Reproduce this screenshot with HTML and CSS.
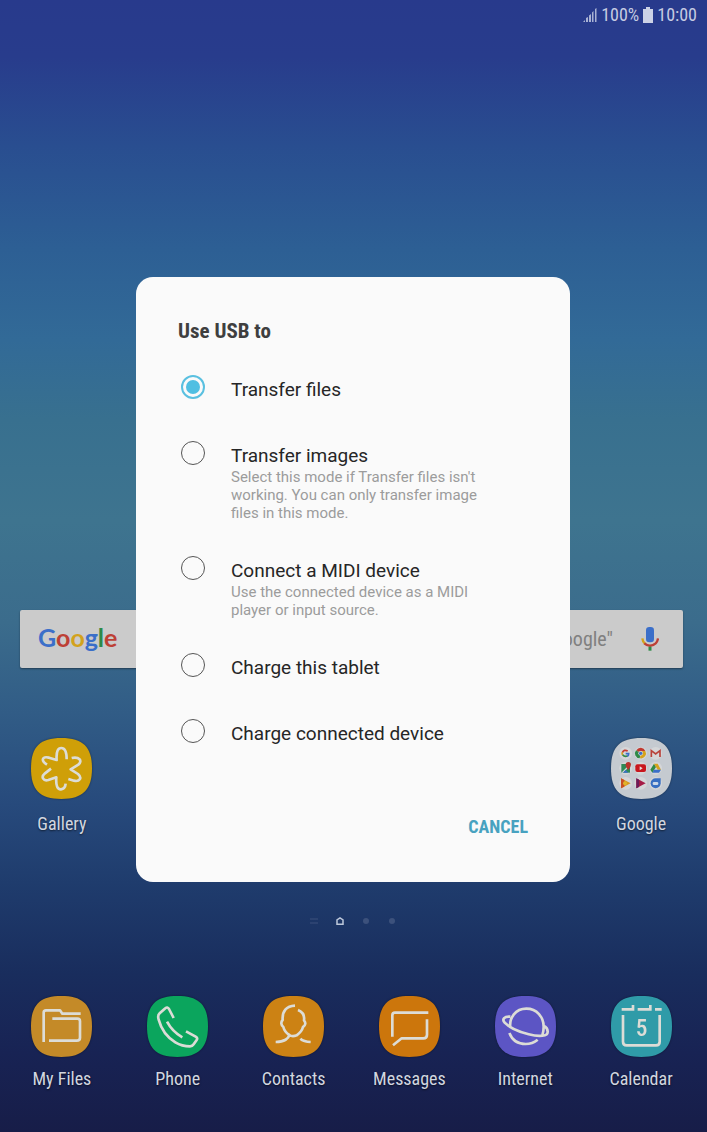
FILE: index.html
```html
<!DOCTYPE html>
<html lang="en">
<head>
<meta charset="utf-8">
<meta name="viewport" content="width=device-width, initial-scale=1">
<title>Use USB to</title>
<link rel="stylesheet" href="styles.css">
</head>
<body>
<div class="home">
  <header class="status">
    <svg class="signal" viewBox="0 0 14 14" aria-hidden="true"><path d="M0 14l2-2v2zM3 14v-4l2-1v5zM6 14V7.500L8 6v8zM9 14V4.500L10.500 3v11zM12 14V1l1.500-1v14z"/></svg>
    <span>100%</span>
    <svg class="battery" viewBox="0 0 10 16" aria-hidden="true"><path d="M3 0h4v2h3v14H0V2h3z"/></svg>
    <span>10:00</span>
  </header>

  <main class="desktop">
    <form class="search">
      <span class="logo"><span class="b">G</span><span class="r">o</span><span class="y">o</span><span class="b">g</span><span class="g">l</span><span class="r">e</span></span>
      <input class="query" type="text" aria-label="Search" placeholder='Say "Ok Google"'>
      <button class="mic" type="button" aria-label="Voice search">
        <svg viewBox="0 0 54 72" aria-hidden="true">
          <rect x="15" y="0" width="24" height="46" rx="10" fill="#3b6fc9"/>
          <path d="M4 34q1 10 8 16" fill="none" stroke="#d3a21c" stroke-width="7"/>
          <path d="M10 49q17 15 34 0 6-6 7-15" fill="none" stroke="#bd4036" stroke-width="7"/>
          <path d="M27 59v12" stroke="#2d8a47" stroke-width="9"/>
        </svg>
      </button>
    </form>

    <nav class="apps" aria-label="Apps">
      <a class="app" href="#gallery">
        <svg class="icon" viewBox="0 0 183 183" aria-hidden="true">
          <path class="tile" fill="#cf9f08" d="M91 0C156 0 183 27 183 91S156 183 91 183 0 156 0 91 27 0 91 0z"/>
          <path class="line" d="M48 80C28 67 34 54 54 59l23 7C75 38 82 30 91 30s16 11 16 34M122 60c22-5 34 8 20 20l-23 14 22 14c14 12 4 24-12 20l-17-5M60 92L42 106c-14 12-4 24 10 20l24-8c-2 26 4 37 14 36 9-1 13-7 14-17"/>
        </svg>
        <span>Gallery</span>
      </a>
      <a class="app app-last" href="#google">
        <svg class="icon" viewBox="0 0 183 183" aria-hidden="true">
          <path class="tile" fill="#c5cad0" d="M91 0C156 0 183 27 183 91S156 183 91 183 0 156 0 91 27 0 91 0z"/>
          <g fill="#d5d6d8"><circle cx="44" cy="46" r="19"/><circle cx="89" cy="46" r="19"/><circle cx="134" cy="46" r="19"/><circle cx="44" cy="91" r="19"/><circle cx="89" cy="91" r="19"/><circle cx="134" cy="91" r="19"/><circle cx="44" cy="136" r="19"/><circle cx="89" cy="136" r="19"/><circle cx="134" cy="136" r="19"/></g>
          <g fill="none" stroke-width="5">
            <path stroke="#c63a30" d="M50 39q-11-6-16 5"/><path stroke="#d5a21c" d="M34 43q-2 5 1 8"/><path stroke="#2f8a48" d="M35 50q6 8 15 3"/><path stroke="#3b6fc9" d="M44 47h9q0 5-4 8"/>
          </g>
          <path fill="#c0392f" d="M89 46L76 37a15 15 0 0 1 27 2H89z"/><path fill="#2f8a48" d="M89 46l-3 15a15 15 0 0 1-11-24z"/><path fill="#d5a21c" d="M89 46V39h14a15 15 0 0 1-16 22z"/><circle cx="89" cy="46" r="7" fill="#d5d6d8"/><circle cx="89" cy="46" r="5" fill="#3b6fc9"/>
          <path fill="none" stroke="#b9423a" stroke-width="5" d="M121 57V38l13 10 13-10v19"/>
          <path fill="#2f8a56" d="M31 78h26v26H31z"/><path fill="#d5d6d8" d="M31 104l20-20 3 3-18 17z"/><path fill="#3b6fc9" d="M44 96l8 8H36z"/><path fill="#b9342c" d="M52 96q-9-10-8-16a8 8 0 0 1 16 0q0 6-8 16z"/>
          <rect x="73" y="79" width="32" height="23" rx="6" fill="#c8161d"/><path fill="#e8dada" d="M86 85l9 6-9 6z"/>
          <path fill="#2f8a48" d="M129 77l6 10-11 17-6-9z"/><path fill="#d5a21c" d="M129 77h11l10 18h-10z"/><path fill="#3b6fc9" d="M129 95h21l-6 9h-20z"/>
          <path fill="#d79a20" d="M30 121l29 15-29 15z"/><path fill="#c94f25" d="M30 121l10 5v20l-10 5z"/><circle cx="42" cy="136" r="6" fill="#e0b32b"/>
          <path fill="#a51b46" d="M76 121l28 15-28 15z"/><path fill="#6b1c58" d="M76 121l8 4v22l-8 4z"/>
          <path fill="#386fc2" d="M134 121h15v15a15 15 0 1 1-15-15z"/><rect x="125" y="132" width="17" height="9" rx="4" fill="#cbd8e8"/>
        </svg>
        <span>Google</span>
      </a>
    </nav>

    <div class="pager" aria-hidden="true">
      <svg viewBox="0 0 8 8"><path d="M0 2h8M0 6h8" stroke="#3c517c"/></svg>
      <svg viewBox="0 0 8 8"><path d="M1 7.200V3l3-2 3 2v4.200z" fill="none" stroke="#bcc7da" stroke-width="1.500"/></svg>
      <svg viewBox="0 0 8 8"><circle cx="4" cy="4" r="3" fill="#3c517c"/></svg>
      <svg viewBox="0 0 8 8"><circle cx="4" cy="4" r="3" fill="#3c517c"/></svg>
    </div>

    <nav class="apps dock" aria-label="Favourites">
      <a class="app" href="#files">
        <svg class="icon" viewBox="0 0 183 183" aria-hidden="true">
          <path class="tile" fill="#c48a28" d="M91 0C156 0 183 27 183 91S156 183 91 183 0 156 0 91 27 0 91 0z"/>
          <path class="line" d="M38 138V50q0-7 7-7h42l7 10h55M64 68h75q8 0 8 8v49q0 9-10 9H54"/>
        </svg>
        <span>My Files</span>
      </a>
      <a class="app" href="#phone">
        <svg class="icon" viewBox="0 0 183 183" aria-hidden="true">
          <path class="tile" fill="#0ba55d" d="M91 0C156 0 183 27 183 91S156 183 91 183 0 156 0 91 27 0 91 0z"/>
          <path class="line" d="M80 66L66 39q-5-8-11-2L38 52q-7 6-3 19 12 45 50 68 20 12 44 12 7 0 11-6l9-13q4-6-3-10l-29-16M60 77q16 30 46 47"/>
        </svg>
        <span>Phone</span>
      </a>
      <a class="app" href="#contacts">
        <svg class="icon" viewBox="0 0 183 183" aria-hidden="true">
          <path class="tile" fill="#cc8214" d="M91 0C156 0 183 27 183 91S156 183 91 183 0 156 0 91 27 0 91 0z"/>
          <path class="line" d="M96 29C70 30 57 46 59 72c-6 6-5 16 2 21 3 12 10 19 18 24-2 10-14 21-41 21M105 42c15 6 20 17 18 31 6 7 5 15-3 20-3 12-12 20-19 25-8 3-16 3-22-1M112 128q10 9 31 10"/>
        </svg>
        <span>Contacts</span>
      </a>
      <a class="app" href="#messages">
        <svg class="icon" viewBox="0 0 183 183" aria-hidden="true">
          <path class="tile" fill="#cc760c" d="M91 0C156 0 183 27 183 91S156 183 91 183 0 156 0 91 27 0 91 0z"/>
          <path class="line" d="M148 50H48q-8 0-8 8v64M144 70v46q0 11-11 11H68l-26 21"/>
        </svg>
        <span>Messages</span>
      </a>
      <a class="app" href="#internet">
        <svg class="icon" viewBox="0 0 183 183" aria-hidden="true">
          <path class="tile" fill="#5c55c4" d="M91 0C156 0 183 27 183 91S156 183 91 183 0 156 0 91 27 0 91 0z"/>
          <path class="line" d="M46 95C42 64 62 38 94 38s52 26 52 54q0 14-4 26M46 62C28 60 20 70 29 80c12 13 42 27 72 35 32 8 58 6 57-8 0-8-5-14-11-17M43 111c8 20 26 33 49 33q20 0 36-13"/>
        </svg>
        <span>Internet</span>
      </a>
      <a class="app" href="#calendar">
        <svg class="icon" viewBox="0 0 183 183" aria-hidden="true">
          <path class="tile" fill="#2f9ba8" d="M91 0C156 0 183 27 183 91S156 183 91 183 0 156 0 91 27 0 91 0z"/>
          <path class="line calendar-line" d="M32 40h34V27M80 40h38V27M132 40h20M36 57v80q0 11 11 11h88q11 0 11-11V57"/>
          <text class="day" x="92" y="120" text-anchor="middle">5</text>
        </svg>
        <span>Calendar</span>
      </a>
    </nav>
  </main>
</div>

<div class="overlay">
  <form class="dialog" role="dialog" aria-labelledby="usb-title">
    <h1 class="title" id="usb-title">Use USB to</h1>
    <div class="options">
      <label class="option">
        <input class="radio" type="radio" name="usb" checked>
        <span class="copy"><span class="name">Transfer files</span></span>
      </label>
      <label class="option">
        <input class="radio" type="radio" name="usb">
        <span class="copy"><span class="name">Transfer images</span><span class="note">Select this mode if Transfer files isn't working. You can only transfer image files in this mode.</span></span>
      </label>
      <label class="option">
        <input class="radio" type="radio" name="usb">
        <span class="copy"><span class="name">Connect a MIDI device</span><span class="note">Use the connected device as a MIDI player or input source.</span></span>
      </label>
      <label class="option">
        <input class="radio" type="radio" name="usb">
        <span class="copy"><span class="name">Charge this tablet</span></span>
      </label>
      <label class="option">
        <input class="radio" type="radio" name="usb">
        <span class="copy"><span class="name">Charge connected device</span></span>
      </label>
    </div>
    <div class="actions"><button class="cancel" type="button">CANCEL</button></div>
  </form>
</div>
</body>
</html>
```

FILE: styles.css
```css
* { box-sizing: border-box; }

:root {
  --condensed: "Roboto Condensed", "Liberation Sans Narrow", Roboto, sans-serif;
}

body {
  margin: 0;
  font-family: Roboto, sans-serif;
}

.home {
  display: flex;
  flex-direction: column;
  min-height: 100vh;
  background: linear-gradient(#283a8c 0%, #283c8c 5%, #294e90 13%, #2d5f94 22%, #326a97 30%, #38708f 37%, #3e748f 46%, #3b6c8c 55%, #315c86 63%, #274a7c 71%, #1f3c6d 78%, #192d5d 86%, #182354 93%, #171d48 100%);
}

.status {
  display: flex;
  align-items: center;
  justify-content: flex-end;
  gap: 4px;
  height: 30px;
  padding: 0 10px;
  font: 18px/30px var(--condensed);
  color: #c6cce2;
}
.signal { width: 14px; height: 14px; fill: #a9b2d4; }
.battery { width: 10px; height: 16px; fill: #ccd2e6; }

.desktop {
  display: flex;
  flex: 1;
  flex-direction: column;
  justify-content: flex-end;
}

.search {
  display: flex;
  align-items: center;
  height: 58px;
  margin: 0 24px 70px 20px;
  padding: 0 14px 0 18px;
  border-radius: 2px;
  background: #cbcbcb;
  box-shadow: 0 1px 2px rgba(0, 0, 0, .4);
}
.logo {
  padding-bottom: 4px;
  font: 700 25px/36px Lato, sans-serif;
}
.b { color: #3b6fc9; }
.r { color: #bd4036; }
.y { color: #d3a21c; }
.g { color: #2d8a47; }
.query {
  flex: 1;
  min-width: 0;
  padding: 0;
  border: 0;
  background: none;
  font: 20px/28px var(--condensed);
  text-align: right;
}
.query::placeholder { color: #808080; opacity: 1; }
.mic {
  display: flex;
  justify-content: center;
  width: 38px;
  margin-left: 18px;
  padding: 0;
  border: 0;
  background: none;
}
.mic svg { width: 18px; height: 24px; }

.apps {
  display: grid;
  grid-template-columns: repeat(6, 1fr);
  padding: 0 8px 0 4px;
}
.app {
  display: flex;
  flex-direction: column;
  align-items: center;
  gap: 14px;
  font: 18px/22px var(--condensed);
  color: #d2d7e0;
  text-decoration: none;
  text-shadow: 0 1px 2px rgba(0, 0, 0, .6);
}
.app-last { grid-column: 6; }
.icon { width: 61px; height: 61px; filter: drop-shadow(0 0 1px rgba(0, 0, 0, .4)); }
.line {
  fill: none;
  stroke: #dcdcd6;
  stroke-width: 8;
  stroke-linejoin: round;
}
.calendar-line { stroke-linejoin: miter; }
.day { font: 500 70px var(--condensed); fill: #dcdcd6; text-shadow: none; }

.pager {
  display: flex;
  justify-content: center;
  gap: 18px;
  padding: 82px 2px 71px 0;
}
.pager svg { width: 8px; height: 8px; }

.dock { padding-bottom: 42px; }
.dock .app { gap: 11px; }

.overlay {
  position: fixed;
  inset: 0;
  display: flex;
  align-items: center;
  justify-content: center;
  padding: 27px 1px 0 0;
}
.dialog {
  width: calc(100% - 32px);
  max-width: 434px;
  padding: 42px 42px 37px;
  border-radius: 17px;
  background: #fafafa;
}
.title {
  margin: 0 0 16px;
  font: 700 21px/24px var(--condensed);
  color: #3f3f3f;
}
.options { padding: 0 28px 0 3px; }
.option {
  display: flex;
  align-items: flex-start;
  gap: 26px;
  min-height: 66px;
  padding: 16px 0 18px;
}
.radio {
  flex: none;
  display: grid;
  place-items: center;
  width: 24px;
  height: 24px;
  margin: 0;
  appearance: none;
  border: 1px solid #555;
  border-radius: 50%;
}
.radio:checked { border: 2px solid #5ac0e0; }
.radio:checked::before {
  content: "";
  width: 14px;
  height: 14px;
  border-radius: 50%;
  background: #50bfe2;
}
.copy { display: flex; flex-direction: column; padding-top: 2px; }
.name { font-size: 19px; line-height: 25px; color: #262626; }
.note { font-size: 15px; line-height: 18px; color: #9c9c9c; }

.actions {
  display: flex;
  justify-content: flex-end;
  margin-top: 40px;
}
.cancel {
  height: 36px;
  padding: 0;
  border: 0;
  background: none;
  font: 700 18px/36px var(--condensed);
  color: #48a2c0;
}
```
